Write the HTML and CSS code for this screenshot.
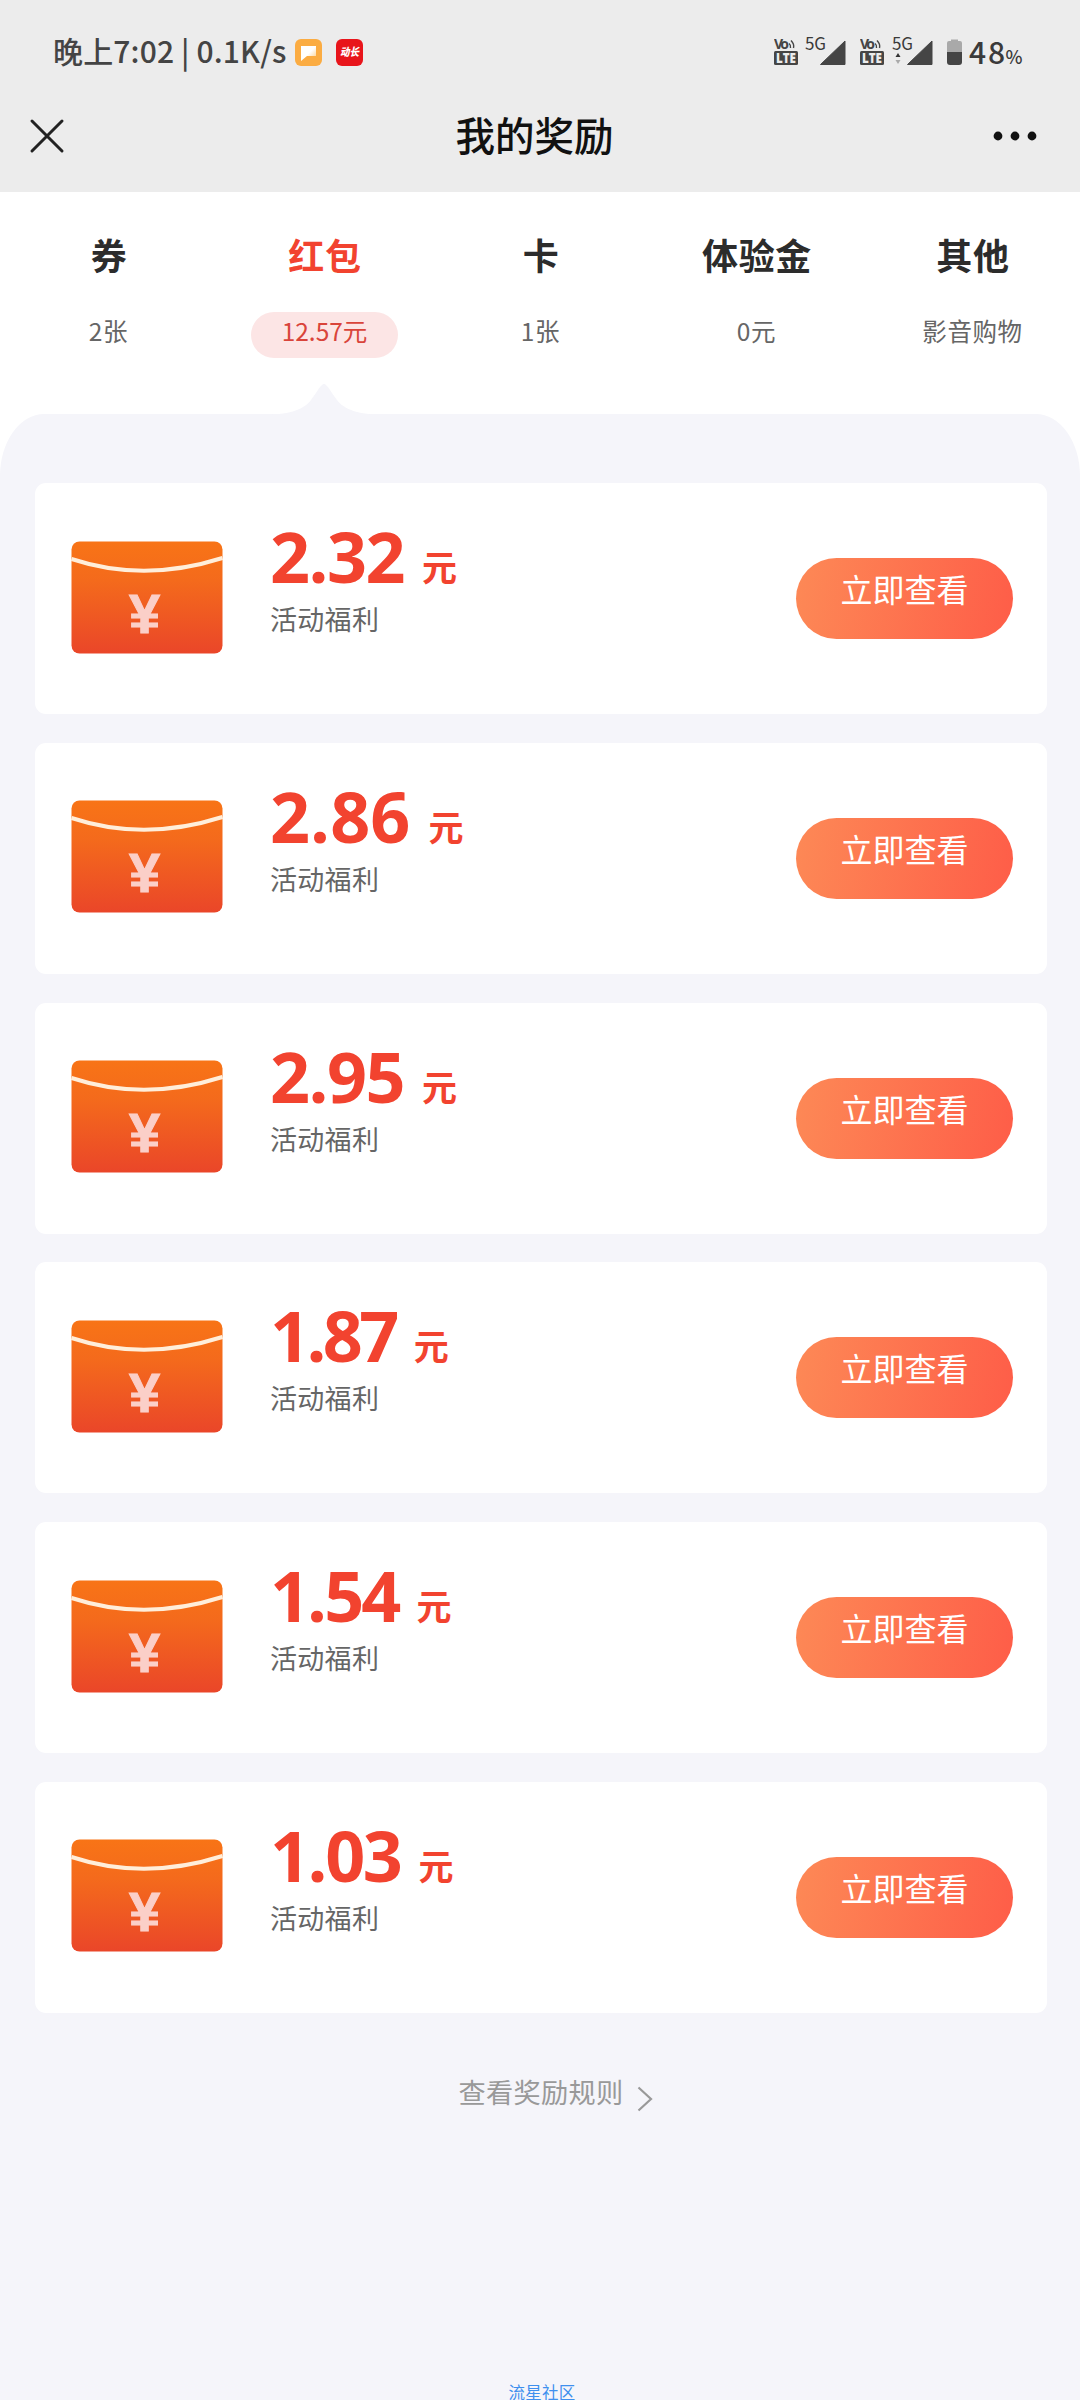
FILE: index.html
```html
<!DOCTYPE html>
<html lang="zh-CN">
<head>
<meta charset="utf-8">
<title>我的奖励</title>
<link rel="stylesheet" href="styles.css">
</head>
<body>
<svg class="defs" width="0" height="0">
  <defs>
    <linearGradient id="env" x1="0" y1="0" x2="0" y2="1">
      <stop offset="0" stop-color="#f87416"/>
      <stop offset=".35" stop-color="#f46a1c"/>
      <stop offset="1" stop-color="#ea4629"/>
    </linearGradient>
    <linearGradient id="note" x1="0" y1="0" x2="1" y2="1">
      <stop offset=".5" stop-color="#fff"/>
      <stop offset="1" stop-color="#fbc878"/>
    </linearGradient>
    <symbol id="envelope" viewBox="0 0 152 113">
      <rect width="151" height="112" x=".5" y=".5" rx="8" fill="url(#env)"/>
      <path d="M.5 18Q73 42 151.500 17" fill="none" stroke="#ffeeda" stroke-width="4"/>
      <text x="73.500" y="91.500" text-anchor="middle" class="yen">¥</text>
    </symbol>
    <symbol id="volte" viewBox="0 0 24 28">
      <text x="0" y="11" class="vo" textLength="15">Vo</text>
      <path d="M15 5.500Q17 7 16.500 10M17 2.500Q20.500 6 19.500 10" fill="none" stroke="#454545" stroke-width="1.400"/>
      <rect y="13" width="24" height="14" rx="1.500" fill="#454545"/>
      <text x="2" y="25" class="lte" textLength="20" lengthAdjust="spacingAndGlyphs">LTE</text>
    </symbol>
  </defs>
</svg>

<header class="top">
  <div class="status">
    <span class="clock">晚上7:02 | 0.1K/s</span>
    <svg class="app" width="27" height="27" viewBox="0 0 27 27"><rect width="27" height="27" rx="6" fill="#fbac42"/><path d="M6 7H21V17H12L6 22Z" fill="url(#note)"/></svg>
    <svg class="app app-red" width="27" height="27" viewBox="0 0 27 27"><rect width="27" height="27" rx="6" fill="#e8151b"/><text x="4" y="17" class="app-text" textLength="19" lengthAdjust="spacingAndGlyphs">动长</text></svg>
    <svg class="signals" width="250" height="34" viewBox="0 0 250 34">
      <use href="#volte" x="0" y="3" width="24" height="28"/>
      <text x="31" y="15" class="net" textLength="21">5G</text>
      <path d="M71 6V29.500H46.500Z" fill="#454545" stroke="#454545" stroke-linejoin="round"/>
      <use href="#volte" x="86" y="3" width="24" height="28"/>
      <text x="118" y="15" class="net" textLength="21">5G</text>
      <path d="M121.500 22L124 18L126.500 22Z" fill="#333"/>
      <path d="M121.500 25L124 29L126.500 25Z" fill="#aaa"/>
      <path d="M158 6V29.500H133.500Z" fill="#454545" stroke="#454545" stroke-linejoin="round"/>
      <path d="M173 18V8Q173 6 175 6H177V4.500H184V6H186Q188 6 188 8V18Z" fill="#a9a9a9"/>
      <path d="M173 17H188V27Q188 30 185 30H176Q173 30 173 27Z" fill="#454545"/>
      <text x="195" y="28.500" class="pct" textLength="36">48</text>
      <text x="231.500" y="28.500" class="pct-sign" textLength="17" lengthAdjust="spacingAndGlyphs">%</text>
    </svg>
  </div>
  <div class="nav">
    <svg width="34" height="34" viewBox="0 0 34 34"><path d="M2 2L32 32M32 2L2 32" stroke="#222" stroke-width="3" stroke-linecap="round"/></svg>
    <h1>我的奖励</h1>
    <svg width="44" height="10" viewBox="0 0 44 10"><g fill="#111"><circle cx="5" cy="5" r="4.400"/><circle cx="22" cy="5" r="4.400"/><circle cx="39" cy="5" r="4.400"/></g></svg>
  </div>
</header>

<nav class="tabs">
  <div class="tab"><b>券</b><span>2张</span></div>
  <div class="tab active"><b>红包</b><span>12.57元</span>
    <svg class="caret" width="116" height="31" viewBox="0 0 116 31"><path d="M0 31C26 30 38 25 45 16C51 8 55 0 58 0C61 0 65 8 71 16C78 25 90 30 116 31Z" fill="#f5f5fa"/></svg>
  </div>
  <div class="tab"><b>卡</b><span>1张</span></div>
  <div class="tab"><b>体验金</b><span>0元</span></div>
  <div class="tab"><b>其他</b><span>影音购物</span></div>
</nav>

<main class="panel">
  <div class="list">
    <section class="card"><svg class="env"><use href="#envelope"/></svg><div class="info"><p class="amount w130"><span>2.32</span><small>元</small></p><p class="desc">活动福利</p></div><a class="btn">立即查看</a></section>
    <section class="card"><svg class="env"><use href="#envelope"/></svg><div class="info"><p class="amount w137"><span>2.86</span><small>元</small></p><p class="desc">活动福利</p></div><a class="btn">立即查看</a></section>
    <section class="card"><svg class="env"><use href="#envelope"/></svg><div class="info"><p class="amount w130"><span>2.95</span><small>元</small></p><p class="desc">活动福利</p></div><a class="btn">立即查看</a></section>
    <section class="card"><svg class="env"><use href="#envelope"/></svg><div class="info"><p class="amount w122"><span>1.87</span><small>元</small></p><p class="desc">活动福利</p></div><a class="btn">立即查看</a></section>
    <section class="card"><svg class="env"><use href="#envelope"/></svg><div class="info"><p class="amount w125"><span>1.54</span><small>元</small></p><p class="desc">活动福利</p></div><a class="btn">立即查看</a></section>
    <section class="card"><svg class="env"><use href="#envelope"/></svg><div class="info"><p class="amount w127"><span>1.03</span><small>元</small></p><p class="desc">活动福利</p></div><a class="btn">立即查看</a></section>
  </div>
  <a class="rules">查看奖励规则<svg width="16" height="26" viewBox="0 0 16 26"><path d="M1.500 1.500L14 13L1.500 24.500" fill="none" stroke="#999" stroke-width="2.200"/></svg></a>
  <footer>流星社区</footer>
</main>
</body>
</html>
```
FILE: styles.css
```css
* { box-sizing: border-box; margin: 0; padding: 0; }
body {
  width: 1080px;
  height: 2400px;
  overflow: hidden;
  display: flex;
  flex-direction: column;
  background: #fff;
  font-family: "Noto Sans CJK SC", sans-serif;
  color: #2c2c2c;
}
svg { display: block; flex: none; overflow: visible; }
.defs { position: absolute; }

.top { height: 192px; background: #ececec; flex: none; }
.status { display: flex; align-items: center; height: 104px; padding: 0 55px 0 53px; }
.clock { font-size: 30px; line-height: 40px; width: 242px; letter-spacing: .15px; font-weight: 500; white-space: nowrap; color: #444; padding-bottom: 4px; }
.app { margin-right: 14px; }
.app-text { font-size: 11px; font-weight: 900; font-style: italic; fill: #fff; }
.signals { margin-left: auto; margin-right: 1px; }
.vo { font: 700 14px "Noto Sans", sans-serif; fill: #454545; }
.lte { font: 800 14px "Open Sans", sans-serif; fill: #ececec; }
.net { font-size: 17px; fill: #3a3a3a; }
.pct { font-size: 30px; font-weight: 500; fill: #3a3a3a; }
.pct-sign { font-size: 19px; font-weight: 500; fill: #3a3a3a; }

.nav { display: flex; align-items: center; justify-content: space-between; height: 64px; padding: 0 43px 0 30px; }
.nav h1 { font-size: 39.5px; line-height: 60px; font-weight: 500; color: #111; padding-left: 12px; padding-bottom: 5px; }

.tabs { display: grid; grid-template-columns: repeat(5, 1fr); height: 222px; flex: none; }
.tab { display: flex; flex-direction: column; align-items: center; padding-top: 38px; position: relative; }
.tab b { font-size: 36px; line-height: 48px; font-weight: 700; letter-spacing: .7px; height: 82px; padding-left: 2px; }
.tab span { font-size: 24.5px; line-height: 37px; height: 46px; letter-spacing: .6px; color: #666; padding-left: 1px; }
.active b { color: #f2432f; }
.active span { width: 147px; text-align: center; border-radius: 23px; background: #fce5e5; color: #d9443a; letter-spacing: 0; }
.caret { position: absolute; left: 50px; bottom: -1px; }

.panel { flex: 1; background: #f5f5fa; border-radius: 44px 44px 0 0 / 62px 62px 0 0; padding: 69px 33px 0 35px; display: flex; flex-direction: column; align-items: center; }
.list { width: 100%; display: flex; flex-direction: column; gap: 28.8px; }
.card { height: 231px; border-radius: 11px; background: #fff; display: flex; align-items: flex-start; padding: 0 34px 0 36px; }
.env { width: 152px; height: 113px; margin-top: 57.5px; }
.yen { font: 700 56px "Liberation Sans", sans-serif; fill: #fbcfc8; stroke: #fbcfc8; stroke-width: 1px; }
.info { margin-left: 47px; padding-top: 34px; }
.amount { display: flex; align-items: flex-start; height: 84px; color: #f2432f; }
.amount span { font: 700 70px/78px "Open Sans", sans-serif; }
.amount small { font-size: 35px; line-height: 48px; font-weight: 700; margin: 25px 0 0 18px; }
.w130 span { letter-spacing: -1.5px; }
.w137 span { letter-spacing: .1px; }
.w122 span { letter-spacing: -3.6px; }
.w125 span { letter-spacing: -2.9px; }
.w127 span { letter-spacing: -2.4px; }
.desc { font-size: 27px; line-height: 36px; letter-spacing: .3px; color: #666; }
.btn { margin-left: auto; margin-top: 75px; width: 217px; height: 81px; border-radius: 41px; background: linear-gradient(100deg, #fd8956, #fe5d48); color: #fff; font-size: 32px; line-height: 60px; text-align: center; }
.rules { display: flex; font-size: 27.2px; line-height: 40px; letter-spacing: .3px; color: #999; margin-top: 58px; padding-left: 30px; gap: 14px; }
.rules svg { margin-top: 15px; }
footer { margin-top: auto; height: 19px; font-size: 16.5px; line-height: 22px; letter-spacing: .3px; color: #3f90ee; padding-left: 2px; }
```
